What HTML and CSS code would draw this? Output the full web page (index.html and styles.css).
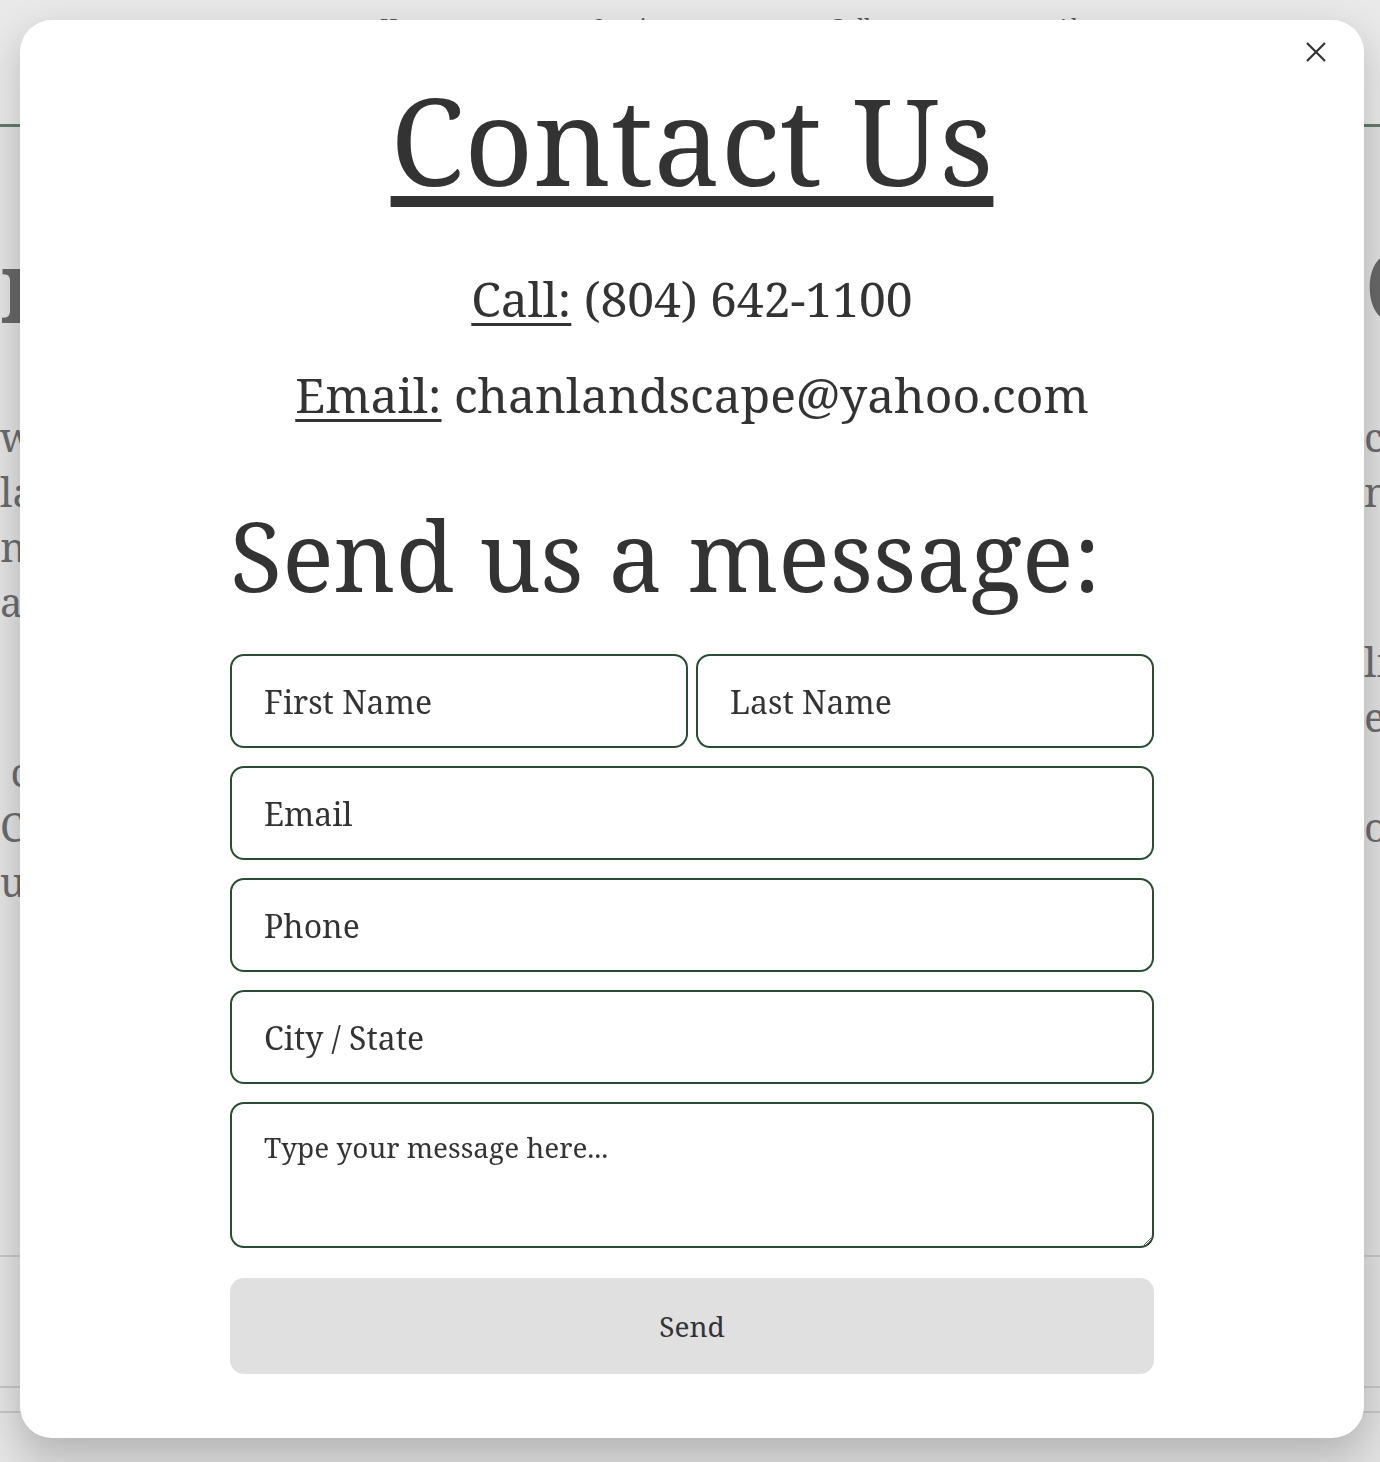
FILE: index.html
```html
<!DOCTYPE html>
<html lang="en">
<head>
<meta charset="utf-8">
<title>Contact Us</title>
<link rel="stylesheet" href="styles.css">
</head>
<body>
<div class="page">
  <header class="site-header">
    <nav class="nav">
      <span>Home</span><span>Services</span><span>Gallery</span><span>About</span>
    </nav>
  </header>
  <main class="main">
    <section class="col col-left">
      <h2 class="bg-title">n</h2>
      <p class="para">
        <span class="ln">w</span>
        <span class="ln">la</span>
        <span class="ln">n</span>
        <span class="ln">ar</span>
      </p>
      <p class="para">
        <span class="ln">&nbsp;c</span>
        <span class="ln">Co</span>
        <span class="ln">ur</span>
      </p>
    </section>
    <section class="col col-right">
      <h2 class="bg-title light">C</h2>
      <p class="para">
        <span class="ln">c.</span>
        <span class="ln">n</span>
      </p>
      <p class="para">
        <span class="ln">li</span>
        <span class="ln">e</span>
        <span class="ln">&nbsp;</span>
        <span class="ln">o</span>
      </p>
    </section>
  </main>
  <footer class="site-footer">
    <div class="foot-line"></div>
    <div class="foot-gap-a"></div>
    <div class="foot-line"></div>
    <div class="foot-gap-b"></div>
    <div class="foot-line"></div>
  </footer>
</div>

<div class="modal" role="dialog" aria-label="Contact Us">
  <button class="close" type="button" aria-label="Close">
    <svg width="22" height="22" viewBox="0 0 22 22"><path d="M2 2 L20 20 M20 2 L2 20" stroke="#333" stroke-width="2.2" fill="none"/></svg>
  </button>
  <h1 class="title">Contact Us</h1>
  <p class="info first"><span class="label">Call:</span> (804) 642-1100</p>
  <p class="info"><span class="label">Email:</span> chanlandscape@yahoo.com</p>
  <div class="form-wrap">
    <h2 class="subtitle">Send us a message:</h2>
    <form class="form">
      <div class="row two">
        <input class="field" type="text" placeholder="First Name">
        <input class="field" type="text" placeholder="Last Name">
      </div>
      <input class="field" type="email" placeholder="Email">
      <input class="field" type="tel" placeholder="Phone">
      <input class="field" type="text" placeholder="City / State">
      <textarea class="field area" placeholder="Type your message here..."></textarea>
      <button class="send" type="button">Send</button>
    </form>
  </div>
</div>
</body>
</html>
```
FILE: styles.css
```css
* { box-sizing: border-box; }
html, body { margin: 0; padding: 0; }
body {
  font-family: "Noto Serif", "DejaVu Serif", serif;
  background: linear-gradient(90deg, #e4e4e4 0%, #dcdcdc 3%, #dcdcdc 97%, #e0e0e0 100%);
  color: #6b6b6b;
  width: 1380px;
  height: 1462px;
  overflow: hidden;
}
.page {
  width: 1380px;
  height: 1462px;
  display: flex;
  flex-direction: column;
}
.site-header {
  height: 127px;
  flex: none;
  background: #e9e9e9;
  border-bottom: 3px solid #5f7d67;
}
.nav {
  display: flex;
  gap: 150px;
  padding: 11px 0 0 380px;
  font-size: 22px;
  line-height: 30px;
  color: #555;
}
.main {
  flex: none;
  height: 1128px;
  display: flex;
  justify-content: space-between;
  padding-top: 97px;
}
.col { width: 20px; }
.col-left { text-align: right; }
.col-right { width: 16px; text-align: left; }
.bg-title {
  font-size: 100px;
  line-height: 120px;
  margin: 0 0 65px;
  font-weight: 700;
  color: #676767;
  white-space: nowrap;
}
.bg-title.light { font-weight: 400; }
.col-left .bg-title { margin-right: -12px; }
.para {
  font-size: 40px;
  line-height: 55px;
  margin: 0 0 115px;
  white-space: nowrap;
}
.ln { display: block; }
.col-left .para { margin-right: -6px; }
.site-footer { flex: none; }
.foot-line { height: 2px; background: #c6c6c6; }
.foot-gap-a { height: 129px; }
.foot-gap-b { height: 23px; }

.modal {
  position: fixed;
  left: 20px;
  top: 20px;
  width: 1344px;
  height: 1418px;
  background: #fff;
  border-radius: 32px;
  box-shadow: 0 14px 40px rgba(0,0,0,0.2);
  color: #333;
  padding-top: 45px;
  display: flex;
  flex-direction: column;
  align-items: center;
}
.close {
  position: absolute;
  top: 21px;
  right: 37px;
  width: 22px;
  height: 22px;
  padding: 0;
  border: 0;
  background: none;
  cursor: pointer;
}
.close svg { display: block; }
.title {
  margin: 0;
  font-size: 120px;
  line-height: 150px;
  font-weight: 400;
  text-decoration: underline;
  text-decoration-thickness: 11px;
  text-underline-offset: 10px;
}
.info {
  margin: 0;
  font-size: 48px;
  line-height: 96px;
}
.info.first { margin-top: 36px; }
.label {
  text-decoration: underline;
  text-decoration-thickness: 3px;
  text-underline-offset: 6px;
}
.form-wrap { width: 924px; margin-top: 52px; }
.subtitle {
  margin: 0 0 39px;
  font-size: 96px;
  line-height: 120px;
  font-weight: 400;
}
.form {
  display: flex;
  flex-direction: column;
  gap: 18px;
}
.row.two {
  display: grid;
  grid-template-columns: 1fr 1fr;
  gap: 8px;
}
.field {
  display: block;
  width: 100%;
  height: 94px;
  border: 2px solid #24502f;
  border-radius: 14px;
  padding: 0 32px;
  font-family: inherit;
  font-size: 32px;
  color: #333;
  background: #fff;
  outline: none;
}
.field::placeholder { color: #333; opacity: 1; }
.area {
  height: 146px;
  padding: 24px 32px;
  font-size: 28px;
  resize: vertical;
}
.send {
  margin-top: 12px;
  height: 96px;
  border: 0;
  border-radius: 14px;
  background: #e0e0e0;
  font-family: inherit;
  font-size: 28px;
  color: #333;
}
```
